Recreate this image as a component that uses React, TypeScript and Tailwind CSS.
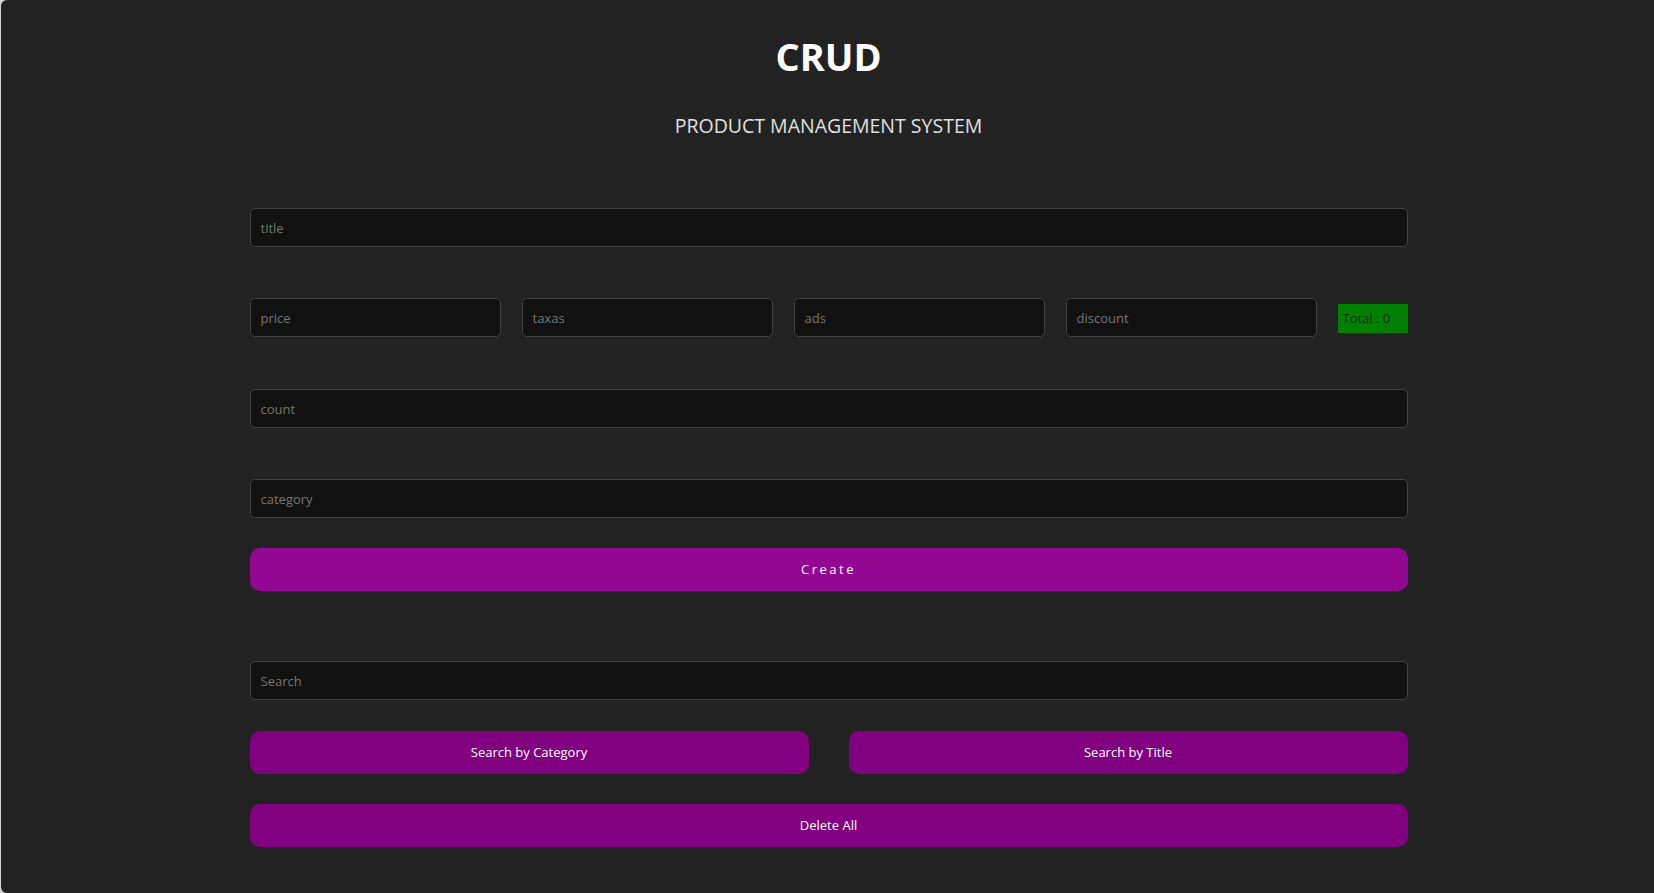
import React from "react";

const font = { fontFamily: '"Open Sans", "Noto Sans", sans-serif' };

function Field({ placeholder }: { placeholder: string }) {
  return (
    <input
      placeholder={placeholder}
      className="w-full h-[39px] rounded-[5px] border border-[#444] bg-[#111] px-[10px] text-[13px] text-[#ddd] outline-none placeholder:text-[#767676]"
    />
  );
}

export default function App() {
  return (
    <div className="w-full h-[893px] bg-[#d4d4d4] flex" style={font}>
      <div className="ml-px flex-1 h-full bg-[#222] rounded-l-[6px] overflow-hidden pl-[2px]">
        {/* header */}
        <div className="pt-[37px] flex flex-col items-center">
          <h1 className="text-[38px] leading-[38px] font-bold text-white">CRUD</h1>
          <p className="mt-[41px] text-[19.5px] leading-[19px] text-[#e0e0e0]">
            PRODUCT MANAGEMENT SYSTEM
          </p>
        </div>

        {/* form */}
        <div className="mx-auto w-[1158px] mt-[73px] flex flex-col">
          <Field placeholder="title" />

          <div className="mt-[51px] flex items-center gap-[21px]">
            <div className="flex-1">
              <Field placeholder="price" />
            </div>
            <div className="flex-1">
              <Field placeholder="taxas" />
            </div>
            <div className="flex-1">
              <Field placeholder="ads" />
            </div>
            <div className="flex-1">
              <Field placeholder="discount" />
            </div>
            <div className="w-[70px] h-[29px] bg-[#008000] text-[13px] text-[#083008] flex items-center pl-[5px] mt-[2px]">
              Total : 0
            </div>
          </div>

          <div className="mt-[52px]">
            <Field placeholder="count" />
          </div>
          <div className="mt-[51px]">
            <Field placeholder="category" />
          </div>

          <button className="mt-[30px] h-[43px] w-full rounded-[10px] bg-[#930893] text-white text-[13px] tracking-[2.5px]">
            Create
          </button>

          <div className="mt-[70px]">
            <Field placeholder="Search" />
          </div>

          <div className="mt-[31px] flex gap-[40px]">
            <button className="flex-1 h-[43px] rounded-[10px] bg-[#800080] text-white text-[13px]">
              Search by Category
            </button>
            <button className="flex-1 h-[43px] rounded-[10px] bg-[#800080] text-white text-[13px]">
              Search by Title
            </button>
          </div>

          <button className="mt-[30px] h-[43px] w-full rounded-[10px] bg-[#800080] text-white text-[13px]">
            Delete All
          </button>
        </div>
      </div>
    </div>
  );
}
